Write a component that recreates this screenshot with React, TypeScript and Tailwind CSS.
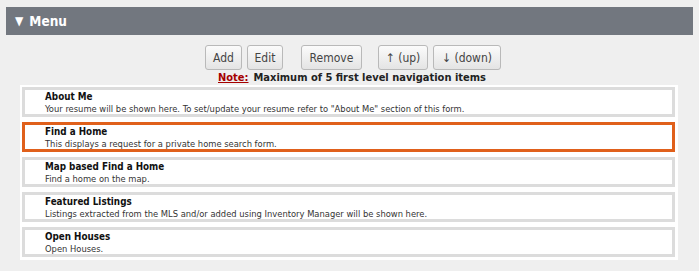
import React from "react";

const items = [
  { t: "About Me", d: 'Your resume will be shown here. To set/update your resume refer to "About Me" section of this form.' },
  { t: "Find a Home", d: "This displays a request for a private home search form.", sel: true },
  { t: "Map based Find a Home", d: "Find a home on the map." },
  { t: "Featured Listings", d: "Listings extracted from the MLS and/or added using Inventory Manager will be shown here." },
  { t: "Open Houses", d: "Open Houses." },
];

function Btn({ children, className = "" }: { children: React.ReactNode; className?: string }) {
  return (
    <button
      className={`h-[25px] whitespace-nowrap flex items-center justify-center rounded-[3px] border border-[#b9b9b9] bg-gradient-to-b from-[#fbfbfb] to-[#e4e4e4] text-[12px] text-[#444] leading-none ${className}`}
    >
      {children}
    </button>
  );
}

export default function App() {
  return (
    <div className="w-[699px] h-[271px] bg-[#efefef] pt-[7px] px-[6px] font-['DejaVu_Sans_Condensed','DejaVu_Sans',sans-serif]">
      <div className="h-[28px] bg-[#72777f] flex items-center pl-[9px] text-white font-bold text-[13.5px]">
        <span className="text-[12px] mr-[6px]">▼</span>Menu
      </div>
      <div className="mt-[10px] flex pl-[199px]">
        <Btn className="w-[37px]">Add</Btn>
        <Btn className="w-[36px] ml-[5px]">Edit</Btn>
        <Btn className="w-[61px] ml-[18px]">Remove</Btn>
        <Btn className="w-[50px] ml-[16px]">↑ (up)</Btn>
        <Btn className="w-[68px] ml-[5px]">↓ (down)</Btn>
      </div>
      <div className="h-[15px] flex items-center text-[11px] font-bold pl-[212px] leading-none whitespace-nowrap">
        <span className="text-[#a50000] underline">Note:</span>
        <span className="text-[#222] ml-[5px]">Maximum of 5 first level navigation items</span>
      </div>
      <div className="ml-[14px] w-[658px] bg-white pt-[2px] pb-[3px] pl-[2px] flex flex-col gap-[5px]">
        {items.map((it) => (
          <div
            key={it.t}
            className={`w-[653px] h-[30px] border-[3px] ${it.sel ? "border-[#e0601b]" : "border-[#dcdcdc]"} pl-[20px] pt-[1px] flex flex-col`}
          >
            <div className="text-[9.8px] font-bold text-[#111] leading-[12px]">{it.t}</div>
            <div className="text-[9.3px] text-[#333] leading-[11px] whitespace-nowrap">{it.d}</div>
          </div>
        ))}
      </div>
    </div>
  );
}
